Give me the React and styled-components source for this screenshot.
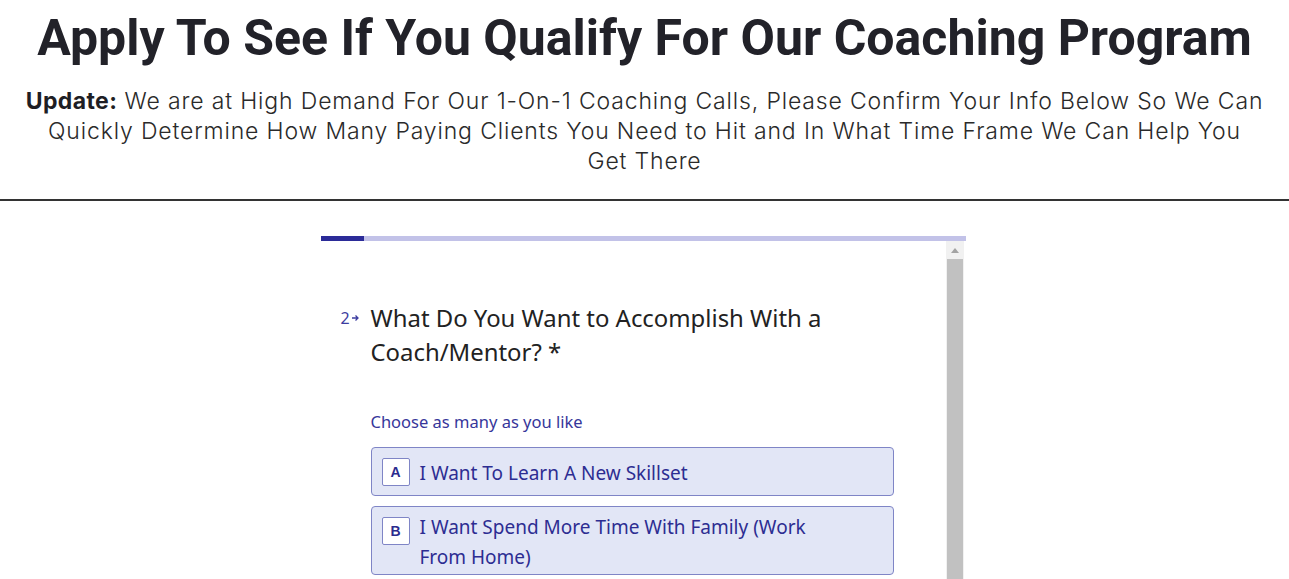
import React from "react";
import styled, { createGlobalStyle } from "styled-components";

const Global = createGlobalStyle`
  html, body { margin: 0; padding: 0; background: #fff; }
  body { overflow: hidden; }
`;

const Page = styled.div`
  width: 1289px;
  height: 579px;
  overflow: hidden;
  display: flex;
  flex-direction: column;
  align-items: center;
`;

const Title = styled.h1`
  margin: 8px 0 0;
  font-family: Roboto, "Liberation Sans", sans-serif;
  font-weight: 700;
  font-size: 50px;
  line-height: 60px;
  color: #222229;
  text-align: center;
`;

const Sub = styled.p`
  margin: 18px 0 0;
  width: 1285px;
  font-family: Inter, "Open Sans", sans-serif;
  font-weight: 300;
  font-size: 23px;
  line-height: 30px;
  color: #2a2a2a;
  text-align: center;
  letter-spacing: 0.85px;
  white-space: nowrap;
  b { font-weight: 700; color: #1e1e24; letter-spacing: 0.4px; }
`;

const Rule = styled.hr`
  align-self: stretch;
  margin: 23px 0 0;
  border: 0;
  height: 2px;
  background: #333;
`;

const Frame = styled.div`
  margin: 35px 0 0 -3px;
  width: 645px;
  flex: 1;
  display: flex;
  flex-direction: column;
`;

const Progress = styled.div`
  height: 5px;
  background: #c2c2e8;
  display: flex;
`;

const ProgressFill = styled.div`
  background: #2b2b98;
  height: 100%;
`;

const Body = styled.div`
  flex: 1;
  display: flex;
`;

const Content = styled.div`
  flex: 1;
  padding: 60px 0 0 20px;
  font-family: "Segoe UI", "Noto Sans", sans-serif;
`;

const Scrollbar = styled.div`
  width: 18px;
  margin-right: 2px;
  background: #f1f1f1;
  display: flex;
  flex-direction: column;
`;

const ScrollArrow = styled.div`
  height: 18px;
  display: flex;
  align-items: center;
  justify-content: center;
`;

const ScrollThumb = styled.div`
  flex: 1;
  margin: 0 1px;
  background: #c1c1c1;
`;

const QRow = styled.div`
  display: flex;
  align-items: flex-start;
`;

const QNum = styled.div`
  width: 30px;
  flex: none;
  font-size: 16px;
  line-height: 34px;
  color: #3d3da0;
  display: flex;
  align-items: center;
  gap: 1px;
`;

const Question = styled.div`
  width: 480px;
  font-size: 23.9px;
  line-height: 34px;
  color: #222;
`;

const Block = styled.div`
  margin-left: 30px;
  width: 523px;
`;

const Hint = styled.div`
  margin: 41px 0 0;
  font-size: 16.5px;
  line-height: 24px;
  color: #36369a;
`;

const Option = styled.div`
  margin-top: ${(p) => p.$mt}px;
  display: flex;
  align-items: flex-start;
  gap: 10px;
  padding: 0 10px;
  background: #e2e6f6;
  border: 1px solid #7f85c6;
  border-radius: 4px;
`;

const Key = styled.div`
  flex: none;
  width: 26px;
  height: 26px;
  margin-top: 10px;
  background: #fff;
  border: 1px solid #7f85c6;
  border-radius: 2px;
  display: flex;
  align-items: center;
  justify-content: center;
  font-family: "Liberation Sans", Arial, sans-serif;
  font-weight: 700;
  font-size: 14px;
  color: #2b2b8e;
`;

const OptText = styled.div`
  box-sizing: border-box;
  min-height: 47px;
  padding: 5px 0 2px;
  display: flex;
  align-items: center;
  font-size: 19px;
  line-height: 30px;
  color: #2d2d92;
  width: 420px;
`;

export default function App() {
  return (
    <Page>
      <Global />
      <Title>Apply To See If You Qualify For Our Coaching Program</Title>
      <Sub>
        <b>Update:</b> We are at High Demand For Our 1-On-1 Coaching Calls, Please Confirm Your Info Below So We Can
        <br />
        Quickly Determine How Many Paying Clients You Need to Hit and In What Time Frame We Can Help You
        <br />
        Get There
      </Sub>
      <Rule />
      <Frame>
        <Progress>
          <ProgressFill style={{ width: "43px" }} />
        </Progress>
        <Body>
          <Content>
            <QRow>
              <QNum>
                2
                <svg width="9" height="8" viewBox="0 0 9 8">
                  <path d="M1 4h6M4.5 1.5L7 4l-2.5 2.5" stroke="#3d3da0" strokeWidth="1.3" fill="none" />
                </svg>
              </QNum>
              <Question>What Do You Want to Accomplish With a Coach/Mentor? *</Question>
            </QRow>
            <Block>
              <Hint>Choose as many as you like</Hint>
              <Option $mt={13}>
                <Key>A</Key>
                <OptText>I Want To Learn A New Skillset</OptText>
              </Option>
              <Option $mt={10}>
                <Key>B</Key>
                <OptText>I Want Spend More Time With Family (Work From Home)</OptText>
              </Option>
            </Block>
          </Content>
          <Scrollbar>
            <ScrollArrow>
              <svg width="8" height="5" viewBox="0 0 8 5">
                <path d="M0 5L4 0L8 5Z" fill="#a3a3a3" />
              </svg>
            </ScrollArrow>
            <ScrollThumb />
          </Scrollbar>
        </Body>
      </Frame>
    </Page>
  );
}
